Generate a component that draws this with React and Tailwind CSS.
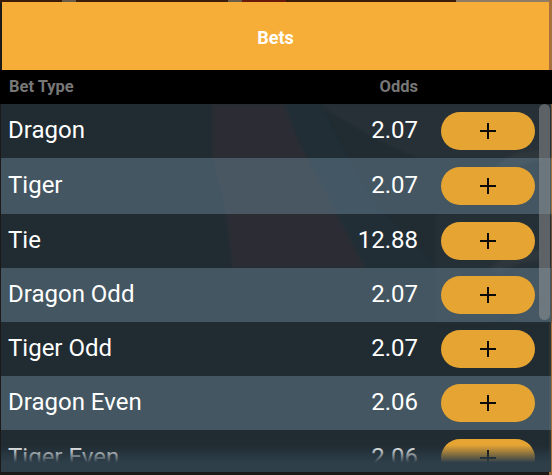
const rows = [
  { name: "Dragon", odds: "2.07", h: "h-[54px]", bg: "bg-[#212d35]/90" },
  { name: "Tiger", odds: "2.07", h: "h-[56px]", bg: "bg-[#465a66]/95" },
  { name: "Tie", odds: "12.88", h: "h-[54px]", bg: "bg-[#212d35]/90" },
  { name: "Dragon Odd", odds: "2.07", h: "h-[54px]", bg: "bg-[#465a66]/95" },
  { name: "Tiger Odd", odds: "2.07", h: "h-[54px]", bg: "bg-[#212d35]/90" },
  { name: "Dragon Even", odds: "2.06", h: "h-[54px]", bg: "bg-[#465a66]/95" },
  { name: "Tiger Even", odds: "2.06", h: "h-[56px]", bg: "bg-[#212d35]/90" },
];

function PhotoBackdrop() {
  return (
    <svg className="absolute inset-0 w-[552px] h-[475px]" viewBox="0 0 552 475" aria-hidden="true">
      <rect width="552" height="475" fill="#1c1a18" />
      <rect x="0" y="0" width="552" height="3" fill="#3a1c08" />
      <rect x="62" y="0" width="14" height="2" fill="#6a5c48" />
      <rect x="228" y="0" width="14" height="2" fill="#6a5c48" />
      <rect x="242" y="0" width="44" height="2" fill="#6a1a0a" />
      <rect x="456" y="0" width="96" height="2" fill="#8f7d68" />
      <rect x="549" y="0" width="3" height="475" fill="#a8703a" />
      <g className="blur-[1.5px]">
        <path d="M212 104 H285 Q300 150 325 190 Q350 240 366 268 H232 Q226 200 212 158 Z" fill="#8a3030" />
        <path d="M285 104 H320 Q345 160 385 214 Q420 250 436 268 H366 Q340 220 318 175 Q296 135 285 104 Z" fill="#1f3a44" />
        <path d="M320 104 H552 V158 H420 Q370 140 320 104 Z" fill="#5a4c48" />
        <path d="M436 214 H552 V322 H436 Z" fill="#4d4540" />
        <path d="M490 172 Q510 150 540 150 L540 160 Q515 165 500 180 Z" fill="#a08a70" />
        <path d="M490 268 Q510 250 540 250 L540 260 Q515 262 500 272 Z" fill="#a08a70" />
        <path d="M495 322 Q515 300 548 295 L548 305 Q520 310 510 322 Z" fill="#16202a" />
      </g>
    </svg>
  );
}

export default function App() {
  return (
    <div className="relative w-[552px] h-[475px] overflow-hidden bg-black font-['Roboto',sans-serif] text-white">
      <PhotoBackdrop />
      <div className="relative flex flex-col h-[472px]">
        <div className="h-[70px] pt-[2px] pl-[2px] pr-[3px] shrink-0">
          <div className="h-full bg-[#f6ae38] flex items-center justify-center pt-[3px] text-[18px] font-bold">Bets</div>
        </div>
        <div className="h-[34px] shrink-0 bg-black flex items-center pl-[9px] pr-[134px] text-[16.5px] font-bold text-[#777777]">
          <span className="flex-1">Bet Type</span>
          <span>Odds</span>
        </div>
        <div className="relative flex-1 overflow-hidden mr-[1px] ml-[1px]">
          {rows.map((r) => (
            <div key={r.name} className={`${r.h} ${r.bg} flex items-center pl-[7px] pr-[16px] text-[24px] leading-none`}>
              <span className="flex-1 pb-[2px]">{r.name}</span>
              <span className="pb-[2px]">{r.odds}</span>
              <button className="ml-[23px] w-[94px] h-[38px] rounded-full bg-[#e6a433] flex items-center justify-center">
                <svg width="16" height="16" viewBox="0 0 16 16" aria-hidden="true">
                  <path d="M0 8H16M8 0V16" stroke="#0b0b0b" strokeWidth="2" fill="none" />
                </svg>
              </button>
            </div>
          ))}
          <div className="absolute left-0 right-0 bottom-0 h-[27px] bg-gradient-to-b from-[#2e3f4a]/0 from-0% to-[#2e3f4a] to-65%" />
          <div className="absolute top-0 right-[1px] w-[11px] h-[216px] rounded-full bg-[#a0a0a0]/45" />
        </div>
      </div>
    </div>
  );
}
